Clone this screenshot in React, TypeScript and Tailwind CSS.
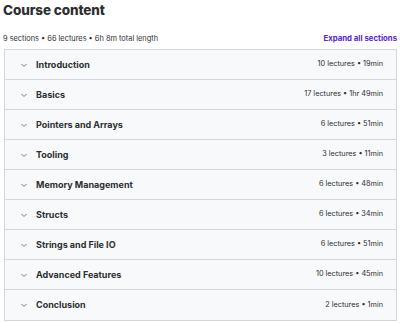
import React from "react";

const sections: [string, string][] = [
  ["Introduction", "10 lectures • 19min"],
  ["Basics", "17 lectures • 1hr 49min"],
  ["Pointers and Arrays", "6 lectures • 51min"],
  ["Tooling", "3 lectures • 11min"],
  ["Memory Management", "6 lectures • 48min"],
  ["Structs", "6 lectures • 34min"],
  ["Strings and File IO", "6 lectures • 51min"],
  ["Advanced Features", "10 lectures • 45min"],
  ["Conclusion", "2 lectures • 1min"],
];

function Chevron() {
  return (
    <svg width="8" height="8" viewBox="0 0 8 8" className="text-[#6a6f73]">
      <path d="M1.5 3 L4 5.5 L6.5 3" fill="none" stroke="currentColor" strokeWidth="0.9" />
    </svg>
  );
}

export default function App() {
  return (
    <div className="w-[400px] h-[323px] bg-white px-[3px] text-[#2d2f31]" style={{ fontFamily: "Inter, 'Noto Sans', sans-serif" }}>
      <h2 className="text-[13.5px] font-extrabold leading-[18px] pt-[1px] tracking-[-0.1px]">Course content</h2>
      <div className="flex items-center justify-between mt-[14px] h-[12px]">
        <span className="text-[7.4px] text-[#2d2f31]">9 sections • 66 lectures • 6h 8m total length</span>
        <span className="text-[7.8px] font-bold text-[#5624d0]">Expand all sections</span>
      </div>
      <div className="mt-[4px] border border-[#d1d7dc] ml-[1px]">
        {sections.map(([t, m], i) => (
          <div
            key={t}
            className={`flex items-center justify-between h-[30px] bg-[#f7f9fa] pl-[15px] pr-[13px] ${i < sections.length - 1 ? "border-b border-[#d1d7dc]" : ""}`}
          >
            <div className="flex items-center gap-[8px]">
              <Chevron />
              <span className="text-[9px] font-bold">{t}</span>
            </div>
            <span className="text-[7.3px] text-[#2d2f31]">{m}</span>
          </div>
        ))}
      </div>
    </div>
  );
}
